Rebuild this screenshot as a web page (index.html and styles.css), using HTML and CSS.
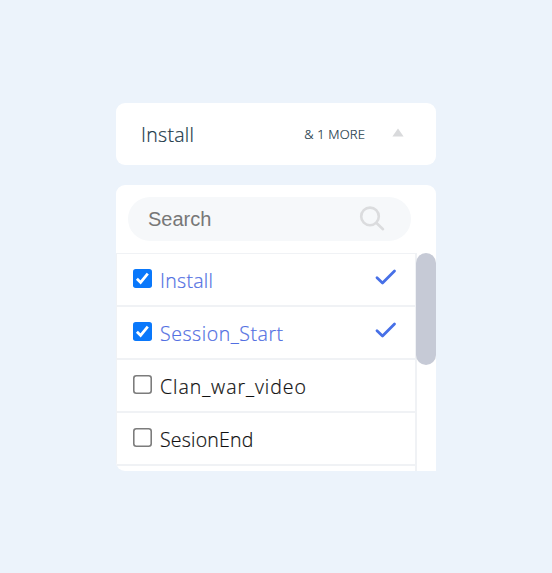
FILE: index.html
```html
<!DOCTYPE html>
<html lang="en">
<head>
<meta charset="utf-8">
<title>Event select</title>
<link rel="stylesheet" href="styles.css">
</head>
<body>
<main class="select">
  <div class="summary">
    <span class="summary-value">Install</span>
    <span class="summary-more">&amp; 1 MORE</span>
    <svg class="arrow" width="12" height="9" viewBox="0 0 12 9"><path d="M6 0.5L11.6 8.5H0.4Z" fill="#d9dadc"/></svg>
  </div>
  <section class="panel">
    <div class="search-area">
      <div class="search">
        <span class="placeholder">Search</span>
        <svg width="26" height="26" viewBox="0 0 26 26" fill="none" stroke="#dbdcde" stroke-width="2.6" stroke-linecap="round"><circle cx="11" cy="10.4" r="8.8"/><path d="M17.5 17L24 23.2"/></svg>
      </div>
    </div>
    <div class="list">
      <ul class="options">
        <li class="option selected">
          <svg class="box" viewBox="0 0 18 18"><rect width="18" height="18" rx="2.6" fill="#0a78fb"/><path d="M3.7 9.2L7.2 12.7L14 4.3" fill="none" stroke="#fff" stroke-width="2.6"/></svg>
          <span class="label install">Install</span>
          <svg class="tick" viewBox="0 0 22 18"><path d="M2 9.8L7.5 15L19.5 3"/></svg>
        </li>
        <li class="option selected">
          <svg class="box" viewBox="0 0 18 18"><rect width="18" height="18" rx="2.6" fill="#0a78fb"/><path d="M3.7 9.2L7.2 12.7L14 4.3" fill="none" stroke="#fff" stroke-width="2.6"/></svg>
          <span class="label session">Session_Start</span>
          <svg class="tick" viewBox="0 0 22 18"><path d="M2 9.8L7.5 15L19.5 3"/></svg>
        </li>
        <li class="option">
          <svg class="box" viewBox="0 0 18 18"><rect x="0.75" y="0.75" width="16.5" height="16.5" rx="2.4" fill="#fff" stroke="#7c7c7c" stroke-width="1.5"/></svg>
          <span class="label clan">Clan_war_video</span>
        </li>
        <li class="option">
          <svg class="box" viewBox="0 0 18 18"><rect x="0.75" y="0.75" width="16.5" height="16.5" rx="2.4" fill="#fff" stroke="#7c7c7c" stroke-width="1.5"/></svg>
          <span class="label end">SesionEnd</span>
        </li>
      </ul>
      <div class="track"><div class="thumb"></div></div>
    </div>
  </section>
</main>
</body>
</html>
```

FILE: styles.css
```css
* { box-sizing: border-box; }
body {
  margin: 0;
  height: 573px;
  padding: 103px 116px 0;
  background: #ecf3fb;
  font-family: "Open Sans", "Noto Sans", sans-serif;
  font-weight: 300;
}
.select { display: flex; flex-direction: column; gap: 20px; width: 320px; }
.summary {
  display: flex;
  align-items: center;
  height: 62px;
  padding: 0 32px 0 25px;
  border-radius: 9px;
  background: #fff;
  color: #203848;
}
.summary-value { flex: 1; font-size: 19.5px; letter-spacing: 0.3px; -webkit-text-stroke: 0.2px; }
.summary-more { font-size: 13px; letter-spacing: 0.15px; -webkit-text-stroke: 0.2px; }
.arrow { margin: 0 0 4px 27px; }
.panel { height: 286px; border-radius: 9px 9px 0 9px; background: #fff; overflow: hidden; }
.search-area { height: 68px; padding: 12px 25px 0 12px; }
.search {
  display: flex;
  align-items: center;
  justify-content: space-between;
  height: 44px;
  padding: 0 26px 0 20px;
  border-radius: 22px;
  background: #f6f8fa;
}
.placeholder {
  font: 400 20px "Liberation Sans", sans-serif;
  color: #777;
}
.list { display: flex; height: 218px; }
.options {
  width: 301px;
  margin: 0;
  padding: 0;
  list-style: none;
  border: solid #f0f2f5;
  border-width: 1px 2px 0 1px;
}
.option {
  display: flex;
  align-items: center;
  height: 53px;
  padding: 0 18px 0 16px;
  border-bottom: 2px solid #f0f2f5;
  color: #101010;
}
.selected { color: #526fe2; }
.box { width: 19px; height: 19px; margin: 0 8px 3px 0; }
.label {
  padding-top: 2px;
  font-size: 19.5px;
  line-height: 28px;
  white-space: nowrap;
  -webkit-text-stroke: 0.2px;
}
.install { letter-spacing: 0.3px; }
.session { letter-spacing: 0.55px; }
.clan { letter-spacing: 0.95px; }
.end { letter-spacing: 0.2px; }
.tick {
  width: 22px;
  height: 18px;
  margin: 0 0 5px auto;
  fill: none;
  stroke: #4770e7;
  stroke-width: 2.8;
  stroke-linecap: round;
  stroke-linejoin: round;
}
.track { width: 19px; height: 217px; }
.thumb { width: 20px; height: 112px; margin-left: -1px; border-radius: 10px; background: #c6cad6; }
```
